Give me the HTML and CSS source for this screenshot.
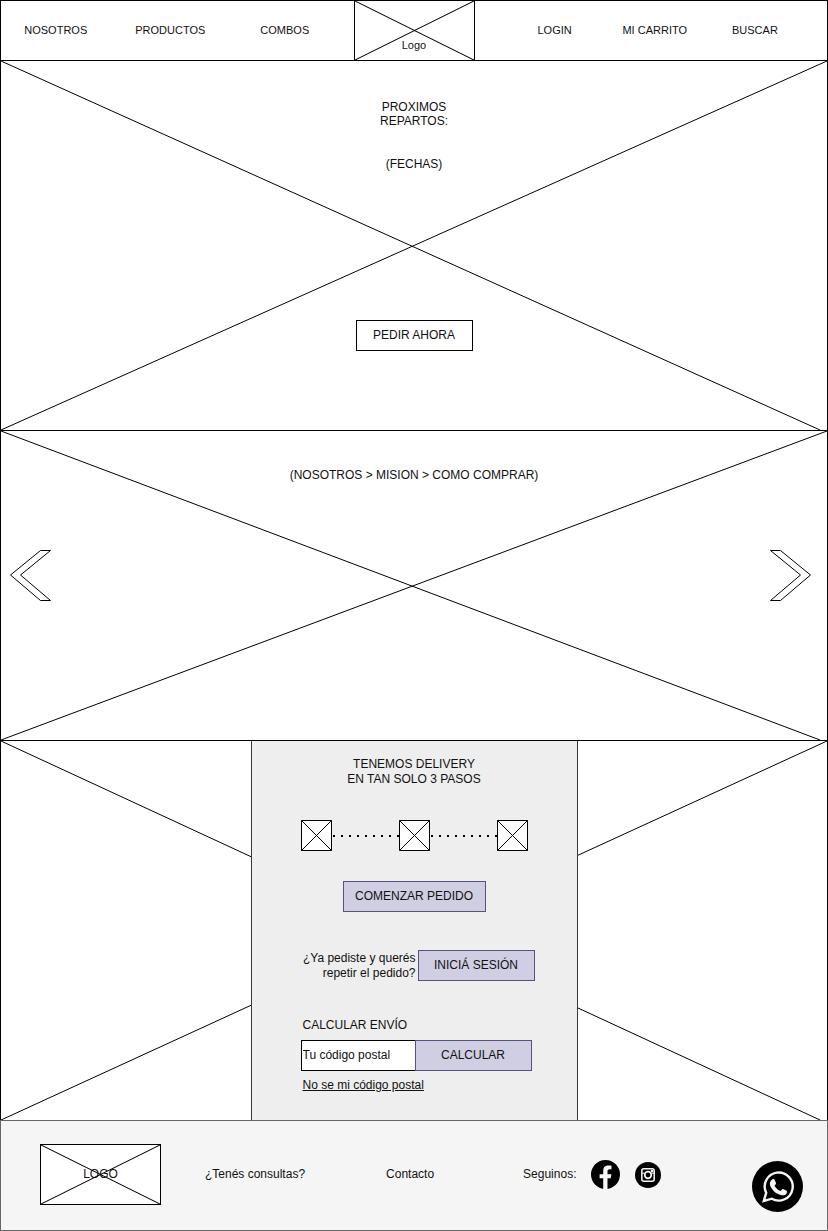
FILE: index.html
```html
<!DOCTYPE html>
<html lang="es">
<head>
<meta charset="utf-8">
<meta name="viewport" content="width=device-width, initial-scale=1">
<title>Inicio</title>
<link rel="stylesheet" href="styles.css">
</head>
<body>
<header class="header">
  <nav class="nav nav-left" aria-label="Secciones">
    <a href="#nosotros">NOSOTROS</a>
    <a href="#productos">PRODUCTOS</a>
    <a href="#combos">COMBOS</a>
  </nav>
  <a class="brand" href="#inicio">
    <svg class="cross" viewBox="0 0 120 60" preserveAspectRatio="none" aria-hidden="true"><path d="M0 0L120 60M120 0L0 60"/></svg>
    <span>Logo</span>
  </a>
  <nav class="nav nav-right" aria-label="Cuenta">
    <a href="#login">LOGIN</a>
    <a href="#carrito">MI CARRITO</a>
    <a href="#buscar">BUSCAR</a>
  </nav>
</header>
<main>
  <section class="section hero">
    <svg class="cross" viewBox="0 0 828 370" preserveAspectRatio="none" aria-hidden="true"><path d="M0 0L821 370M828 0L0 370"/></svg>
    <h1 class="title">PROXIMOS<br>REPARTOS:</h1>
    <p class="dates">(FECHAS)</p>
    <button class="btn btn-plain" type="button">PEDIR AHORA</button>
  </section>
  <section class="section carousel">
    <svg class="cross" viewBox="0 0 828 310" preserveAspectRatio="none" aria-hidden="true"><path d="M0 0L821 310M828 0L0 310"/></svg>
    <h2 class="title">(NOSOTROS &gt; MISION &gt; COMO COMPRAR)</h2>
    <div class="arrows">
      <button class="arrow" type="button" aria-label="Anterior"><svg viewBox="0 0 42 52" width="42" height="52"><path d="M1.500 26L31.500 1.500H41.500L11.500 26L41.500 51.500H31.500Z"/></svg></button>
      <button class="arrow" type="button" aria-label="Siguiente"><svg viewBox="0 0 42 52" width="42" height="52"><path d="M40.500 26L10.500 1.500H.5L30.500 26L.5 51.500H10.500Z"/></svg></button>
    </div>
  </section>
  <section class="section delivery">
    <svg class="cross" viewBox="0 0 828 380" preserveAspectRatio="none" aria-hidden="true"><path d="M0 0L821 380M828 0L0 380"/></svg>
    <div class="panel">
      <h2 class="title">TENEMOS DELIVERY<br>EN TAN SOLO 3 PASOS</h2>
      <div class="steps">
        <svg class="step" viewBox="0 0 31 31"><path d="M.5.5H30.500V30.500H.5ZL30.500 30.500M30.500.5L.5 30.500"/></svg>
        <svg class="dots" aria-hidden="true"><line x1="1" y1="1" x2="100%" y2="1"/></svg>
        <svg class="step" viewBox="0 0 31 31"><path d="M.5.5H30.500V30.500H.5ZL30.500 30.500M30.500.5L.5 30.500"/></svg>
        <svg class="dots" aria-hidden="true"><line x1="1" y1="1" x2="100%" y2="1"/></svg>
        <svg class="step" viewBox="0 0 31 31"><path d="M.5.5H30.500V30.500H.5ZL30.500 30.500M30.500.5L.5 30.500"/></svg>
      </div>
      <button class="btn btn-start" type="button">COMENZAR PEDIDO</button>
      <div class="again">
        <p>¿Ya pediste y querés<br>repetir el pedido?</p>
        <button class="btn" type="button">INICIÁ SESIÓN</button>
      </div>
      <form class="shipping">
        <label for="postal">CALCULAR ENVÍO</label>
        <div class="field">
          <input id="postal" type="text" placeholder="Tu código postal">
          <button class="btn" type="button">CALCULAR</button>
        </div>
        <a href="#codigo">No se mi código postal</a>
      </form>
    </div>
  </section>
</main>
<footer class="footer">
  <div class="footer-main">
    <div class="footer-logo">
      <span>LOGO</span>
      <svg class="cross" viewBox="0 0 120 60" preserveAspectRatio="none" aria-hidden="true"><path d="M0 0L120 60M120 0L0 60"/></svg>
    </div>
    <a class="questions" href="#consultas">¿Tenés consultas?</a>
    <a class="contact" href="#contacto">Contacto</a>
    <div class="social">
      <span>Seguinos:</span>
      <a href="#facebook" aria-label="Facebook"><svg width="29" height="29" viewBox="0 0 29 29"><circle cx="14.500" cy="14.500" r="14.500"/><path fill="#f5f5f5" d="M12.200 29V18.300H8.600V14.200H12.200V11C12.200 7.400 14.200 5.600 17.500 5.600C19 5.600 20.500 5.800 20.500 5.800V9.300H18.800C17 9.300 16.500 10.300 16.500 11.500V14.200H20.400L19.700 18.300H16.500V29Z"/></svg></a>
      <a href="#instagram" aria-label="Instagram"><svg width="26" height="26" viewBox="0 0 26 26"><circle cx="13" cy="13" r="13"/><rect x="6.800" y="6.800" width="12.400" height="12.400" rx="2" fill="none" stroke="#f5f5f5" stroke-width="1.500"/><path d="M7 11.200H9.500M16.500 11.200H19" stroke="#f5f5f5"/><circle cx="13" cy="13" r="3.300" fill="none" stroke="#f5f5f5" stroke-width="1.700"/><rect x="15.800" y="7.900" width="2.300" height="2.300" fill="#f5f5f5"/></svg></a>
    </div>
  </div>
  <a class="whatsapp" href="#whatsapp" aria-label="WhatsApp"><svg width="51" height="51" viewBox="0 0 51 51"><circle cx="25.500" cy="25.500" r="25.500"/><path fill="none" stroke="#f5f5f5" stroke-width="2.400" d="M11.800 40L14.200 31.800A14 14 0 1 1 19.800 37.700Z"/><path fill="#f5f5f5" d="M20.400 18.200C21.300 17.700 22.300 17.900 22.600 18.700L24 22C24.200 22.600 23.900 23.100 22.500 24.700C24 27.300 26 29 28.700 30.100C30.200 28.300 30.600 27.900 31.200 28.100L34.600 29.800C35.300 30.200 35.200 31.300 34.600 32.400C33.700 33.900 31.600 34.500 29.900 34.200C24.600 33.100 20.700 29.800 18.500 25.400C17.200 22.700 17.800 19.800 20.400 18.200Z"/></svg></a>
</footer>
</body>
</html>
```

FILE: styles.css
```css
* {
  box-sizing: border-box;
}

body {
  margin: 0;
  background: #fff;
  color: #111;
  font: 12px/15px "Liberation Sans", Arial, sans-serif;
}

a {
  color: inherit;
  text-decoration: none;
}

p,
h1,
h2 {
  margin: 0;
  font: inherit;
}

svg {
  display: block;
}

.cross {
  position: absolute;
  inset: 0;
  width: 100%;
  height: 100%;
  fill: none;
  stroke: #000;
  pointer-events: none;
}

.cross path {
  vector-effect: non-scaling-stroke;
}

.header {
  display: grid;
  grid-template-columns: 1fr 121px 1fr;
  border: 1px solid #000;
  border-bottom: 0;
  font-size: 11px;
}

.nav {
  display: grid;
  align-items: center;
  text-align: center;
}

.nav-left {
  grid-template-columns: 110fr 120fr 110fr 14fr;
}

.nav-right {
  grid-template-columns: repeat(3, 1fr);
  padding: 0 22px 0 30px;
}

.brand {
  position: relative;
  padding: 37px 0 7px;
  border: solid #000;
  border-width: 0 1px;
  text-align: center;
}

.section {
  position: relative;
  border: 1px solid #000;
  border-bottom: 0;
  text-align: center;
}

.section > :not(.cross) {
  position: relative;
}

.hero {
  padding: 39px 16px 79px;
  line-height: 14px;
}

.dates {
  margin: 29px 0 149px;
}

.btn {
  min-width: 117px;
  height: 31px;
  padding: 0 11px 1px;
  border: 1px solid #56517e;
  border-radius: 0;
  background: #d0cee2;
  color: #111;
  font: inherit;
  line-height: 15px;
}

.btn-plain {
  display: block;
  margin: 0 auto;
  border-color: #000;
  background: #fff;
}

.carousel {
  padding: 37px 0 139px;
}

.arrows {
  display: flex;
  justify-content: space-between;
  margin-top: 66px;
  padding: 0 15px 0 8px;
}

.arrow {
  padding: 0;
  border: 0;
  background: none;
}

.arrow svg {
  fill: #fff;
  stroke: #000;
}

.panel {
  width: 327px;
  margin: 0 auto;
  padding: 16px 0 27px;
  border: solid #36393d;
  border-width: 0 1px;
  background: #eee;
}

.steps {
  display: flex;
  align-items: center;
  margin: 33px 49px 30px;
}

.step {
  width: 31px;
  height: 31px;
  fill: #fff;
  stroke: #000;
}

.dots {
  flex: 1;
  width: 0;
  height: 2px;
  stroke: #000;
  stroke-width: 2;
  stroke-dasharray: 2 6;
}

.btn-start {
  min-width: 143px;
}

.again {
  display: flex;
  justify-content: flex-end;
  align-items: flex-end;
  gap: 2px;
  margin: 38px 42px 37px 49px;
  text-align: right;
}

.shipping {
  margin: 0 45px 0 49px;
  text-align: left;
}

.shipping label,
.shipping a {
  display: block;
  width: fit-content;
  margin-left: 2px;
}

.shipping a {
  text-decoration: underline;
}

.field {
  display: flex;
  margin: 7px 0;
}

.field input {
  flex: 1;
  min-width: 0;
  height: 31px;
  padding: 0 1px 2px;
  border: 1px solid #000;
  border-right: 0;
  border-radius: 0;
  background: #fff;
  color: #111;
  font: inherit;
}

.field input::placeholder {
  color: #111;
  opacity: 1;
}

.footer {
  display: flex;
  justify-content: space-between;
  align-items: flex-start;
  padding: 23px 24px 18px 39px;
  border: 1px solid #666;
  background: #f5f5f5;
}

.footer-main,
.social {
  display: flex;
  align-items: center;
}

.footer-logo {
  position: relative;
  width: 121px;
  padding: 22px 0;
  border: 1px solid #000;
  background: #fff;
  text-align: center;
}

.questions {
  margin: 0 81px 0 44px;
}

.contact {
  margin-right: 89px;
}

.social {
  gap: 15px;
}

.whatsapp {
  margin-top: 17px;
}
```
